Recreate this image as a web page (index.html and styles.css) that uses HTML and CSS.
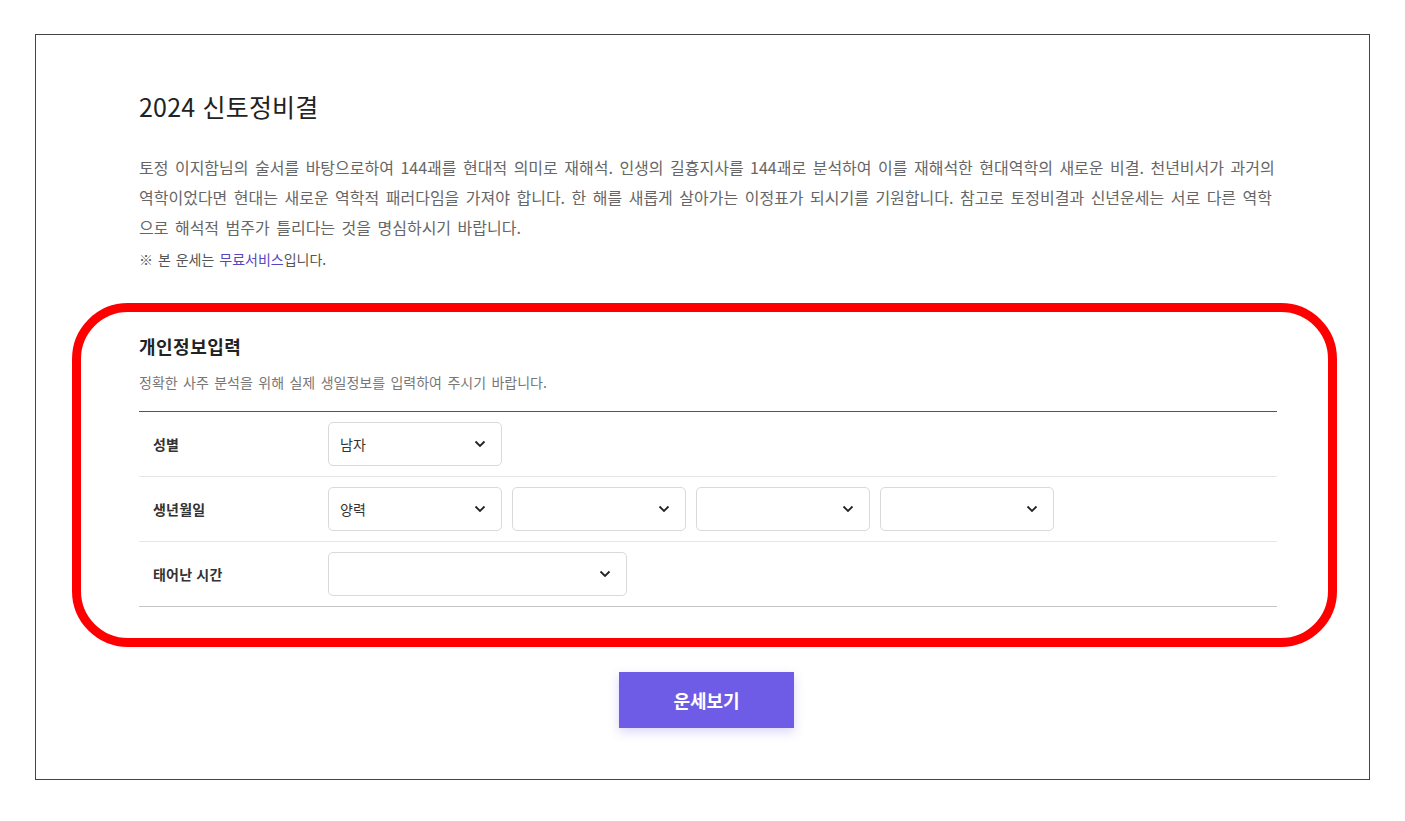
FILE: index.html
```html
<!DOCTYPE html>
<html lang="ko">
<head>
<meta charset="utf-8">
<link rel="stylesheet" href="styles.css">
</head>
<body>
<div class="page">
  <h1 class="title">2024 신토정비결</h1>
  <p class="desc">토정 이지함님의 술서를 바탕으로하여 144괘를 현대적 의미로 재해석. 인생의 길흉지사를 144괘로 분석하여 이를 재해석한 현대역학의 새로운 비결. 천년비서가 과거의 역학이었다면 현대는 새로운 역학적 패러다임을 가져야 합니다. 한 해를 새롭게 살아가는 이정표가 되시기를 기원합니다. 참고로 토정비결과 신년운세는 서로 다른 역학으로 해석적 범주가 틀리다는 것을 명심하시기 바랍니다.</p>
  <p class="note">※ 본 운세는 <span class="link">무료서비스</span>입니다.</p>

  <section class="form">
    <h2 class="form-title">개인정보입력</h2>
    <p class="form-sub">정확한 사주 분석을 위해 실제 생일정보를 입력하여 주시기 바랍니다.</p>
    <div class="table">
      <div class="row">
        <div class="label">성별</div>
        <div class="fields">
          <div class="select"><span>남자</span><svg class="chev" viewBox="0 0 12 8"><path d="M1.5 1.5 L6 6 L10.5 1.5"/></svg></div>
        </div>
      </div>
      <div class="row">
        <div class="label">생년월일</div>
        <div class="fields">
          <div class="select"><span>양력</span><svg class="chev" viewBox="0 0 12 8"><path d="M1.5 1.5 L6 6 L10.5 1.5"/></svg></div>
          <div class="select"><span></span><svg class="chev" viewBox="0 0 12 8"><path d="M1.5 1.5 L6 6 L10.5 1.5"/></svg></div>
          <div class="select"><span></span><svg class="chev" viewBox="0 0 12 8"><path d="M1.5 1.5 L6 6 L10.5 1.5"/></svg></div>
          <div class="select"><span></span><svg class="chev" viewBox="0 0 12 8"><path d="M1.5 1.5 L6 6 L10.5 1.5"/></svg></div>
        </div>
      </div>
      <div class="row last">
        <div class="label">태어난 시간</div>
        <div class="fields">
          <div class="select wide"><span></span><svg class="chev" viewBox="0 0 12 8"><path d="M1.5 1.5 L6 6 L10.5 1.5"/></svg></div>
        </div>
      </div>
    </div>
  </section>

  <div class="actions">
    <button class="btn">운세보기</button>
  </div>
</div>
<div class="highlight"></div>
</body>
</html>
```
FILE: styles.css
```css
* { box-sizing: border-box; }
html, body { margin: 0; padding: 0; background: #fff; }
body {
  font-family: "Noto Sans CJK KR", "Noto Sans", sans-serif;
  color: #333;
}
.page {
  margin: 34px 0 0 35px;
  width: 1335px;
  height: 746px;
  border: 1px solid #444;
  padding: 54px 92px 0 103px;
}
.title {
  margin: 0;
  font-size: 25px;
  font-weight: 400;
  line-height: 34px;
  color: #222;
  letter-spacing: 0.2px;
}
.desc {
  margin: 29px 0 0;
  font-size: 16px;
  line-height: 30px;
  color: #666;
  word-spacing: 2px;
}
.note {
  margin: 7px 0 0;
  font-size: 14px;
  line-height: 20px;
  color: #555;
  word-spacing: 1px;
}
.link { color: #5646c4; }
.form { margin-top: 64px; }
.form-title {
  margin: 0;
  font-size: 18px;
  font-weight: 700;
  line-height: 26px;
  color: #222;
  letter-spacing: 0.5px;
}
.form-sub {
  margin: 13px 0 0;
  font-size: 14px;
  line-height: 20px;
  color: #777;
  word-spacing: 1.5px;
}
.table {
  margin-top: 19px;
  border-top: 1px solid #555;
}
.row {
  display: flex;
  align-items: center;
  height: 65px;
  border-bottom: 1px solid #e6e6e6;
}
.row.last { border-bottom-color: #c4c4c4; }
.label {
  width: 189px;
  padding-left: 14px;
  font-size: 14px;
  font-weight: 700;
  color: #333;
  letter-spacing: 0.2px;
}
.fields { display: flex; gap: 10px; }
.select {
  width: 174px;
  height: 44px;
  border: 1px solid #d9d9d9;
  border-radius: 5px;
  display: flex;
  align-items: center;
  justify-content: space-between;
  padding: 0 15px 0 11px;
  font-size: 14px;
  color: #333;
}
.select.wide { width: 299px; }
.chev {
  width: 12px;
  height: 8px;
  fill: none;
  stroke: #222;
  stroke-width: 1.8;
}
.actions {
  display: flex;
  justify-content: center;
  margin-top: 65px;
}
.btn {
  width: 175px;
  height: 56px;
  border: none;
  background: #6f5ce6;
  color: #fff;
  font-family: inherit;
  font-size: 18px;
  font-weight: 700;
  box-shadow: 0 4px 10px rgba(111, 92, 230, 0.25);
  margin-right: 3px;
}
.highlight {
  position: absolute;
  left: 72px;
  top: 303px;
  width: 1265px;
  height: 344px;
  border: 9px solid #ff0000;
  border-radius: 56px;
  pointer-events: none;
}
```
